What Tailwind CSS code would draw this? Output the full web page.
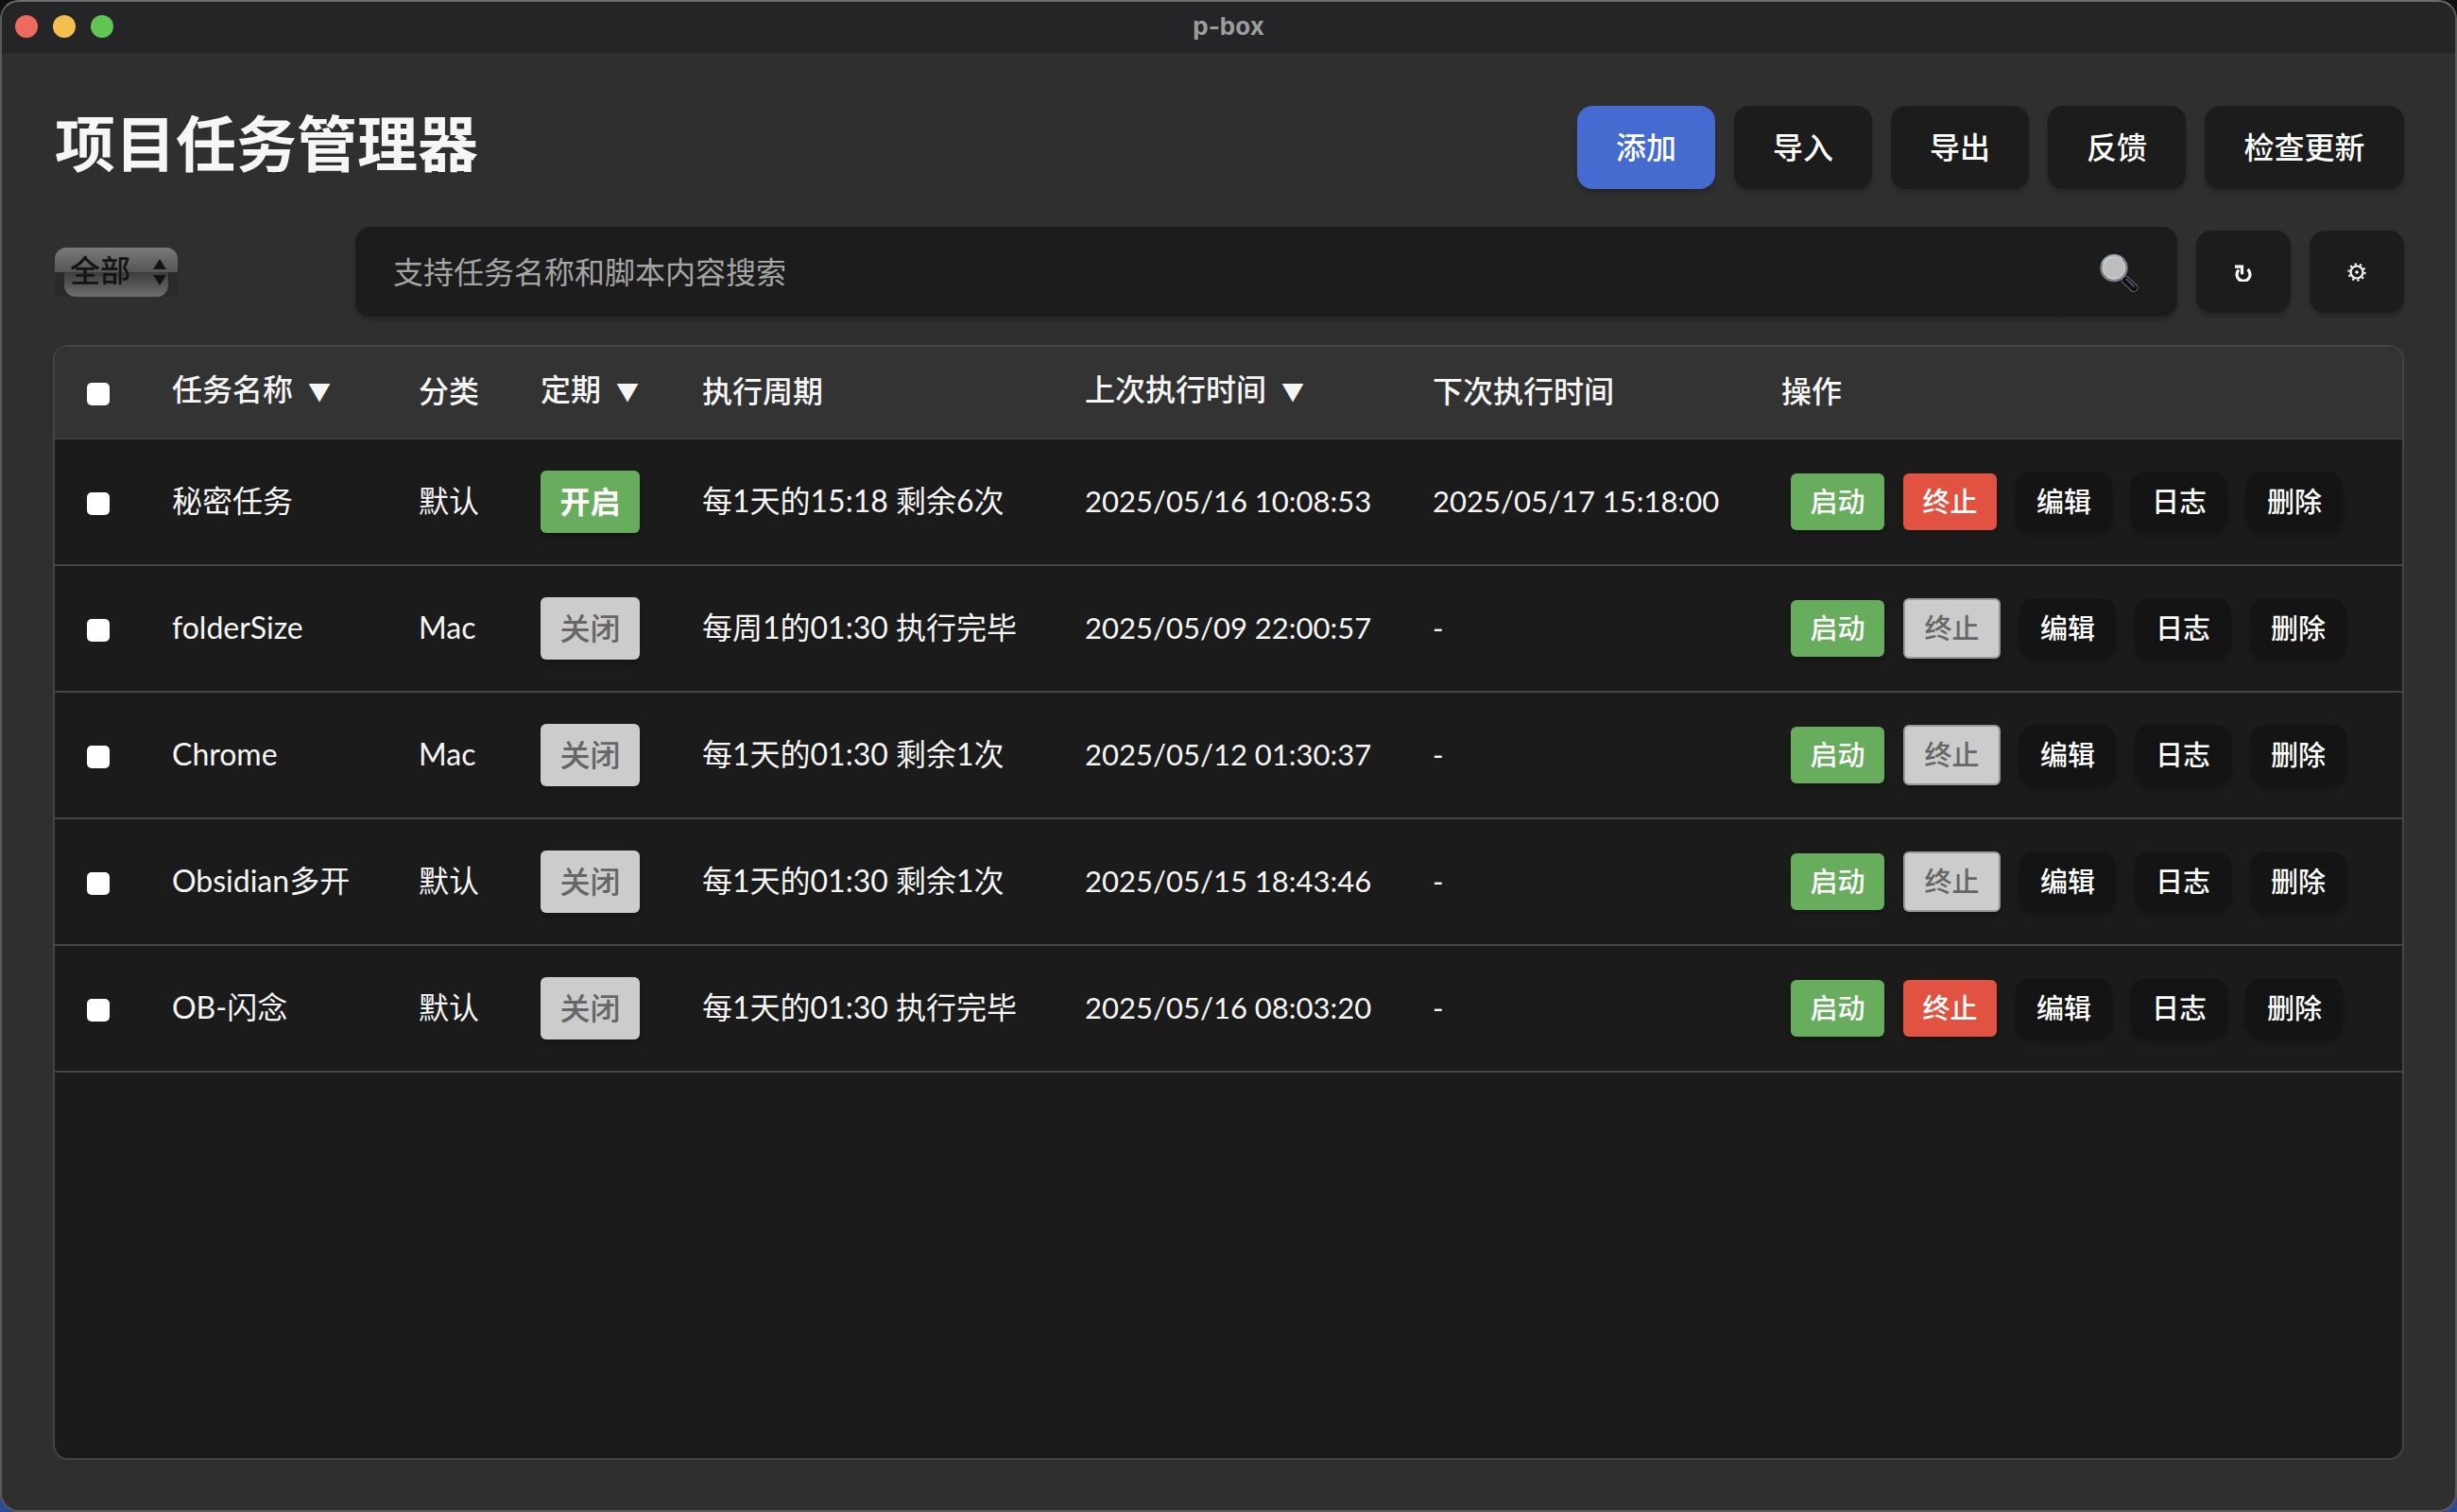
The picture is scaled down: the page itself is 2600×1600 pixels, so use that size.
<!DOCTYPE html>
<html lang="zh-CN">
  <head>
    <meta charset="UTF-8" />
    <meta name="viewport" content="width=device-width, initial-scale=1.0" />
    <title>p-box</title>
    <script src="https://cdn.jsdelivr.net/npm/@tailwindcss/browser@4"></script>
  </head>
  <body class="bg-gradient-to-b from-[#101012] to-[#2f4a96] h-screen font-[Lato,'Noto_Sans_CJK_SC',sans-serif] text-[32px] leading-[48px] text-[#f6f6f6]">
    <div class="h-full flex flex-col bg-[#2f2f2f] border-2 border-[#5a5a5a] border-t-[#6e6e70] rounded-[20px] overflow-hidden">
      <!-- Title bar -->
      <div class="h-[54px] shrink-0 bg-[#252527] grid grid-cols-3 items-center px-[14px] pb-[2px]">
        <div class="flex gap-4">
          <span class="size-6 rounded-full bg-[#ed6a5e]"></span>
          <span class="size-6 rounded-full bg-[#f5bf4f]"></span>
          <span class="size-6 rounded-full bg-[#61c554]"></span>
        </div>
        <div class="text-center text-[26px] leading-8 font-bold font-[Inter,sans-serif] text-[#9d9d9e]">p-box</div>
      </div>

      <main class="flex-1 min-h-0 flex flex-col px-[54px] pt-14 pb-[53px]">
        <!-- Header -->
        <header class="flex items-start justify-between">
          <h1 class="text-[64px] leading-[80px] font-bold pl-[2px]">项目任务管理器</h1>
          <div class="flex gap-5 font-medium text-white">
            <button class="h-[88px] min-w-[146px] px-10 rounded-2xl bg-[#456bd0] shadow-[0_4px_4px_rgba(0,0,0,0.2)]">添加</button>
            <button class="h-[88px] min-w-[146px] px-10 rounded-2xl bg-[#1c1c1c] shadow-[0_4px_4px_rgba(0,0,0,0.2)]">导入</button>
            <button class="h-[88px] min-w-[146px] px-10 rounded-2xl bg-[#1c1c1c] shadow-[0_4px_4px_rgba(0,0,0,0.2)]">导出</button>
            <button class="h-[88px] min-w-[146px] px-10 rounded-2xl bg-[#1c1c1c] shadow-[0_4px_4px_rgba(0,0,0,0.2)]">反馈</button>
            <button class="h-[88px] min-w-[211px] px-10 rounded-2xl bg-[#1c1c1c] shadow-[0_4px_4px_rgba(0,0,0,0.2)]">检查更新</button>
          </div>
        </header>

        <!-- Filter and search -->
        <div class="mt-10 flex items-center">
          <div class="w-[320px] shrink-0 pl-[2px]">
            <div class="relative w-[130px] h-[52px] rounded-t-xl bg-linear-to-b from-[#7a7a7a] from-0% via-[#555] via-50% to-[#2a2a2a] to-50%">
              <span class="absolute inset-x-[10px] bottom-0 h-[26px] rounded-b-xl bg-linear-to-b from-[#3c3c3c] to-[#707070]"></span>
              <select aria-label="分类" class="relative appearance-none w-full h-full pl-4 pb-1 font-medium leading-[48px] text-[#141414]">
                <option>全部</option>
                <option>默认</option>
                <option>Mac</option>
              </select>
              <svg class="absolute right-3 top-3 w-[14px] h-7 pointer-events-none" viewBox="0 0 14 28" fill="#141414"><path d="M0 11 7 0l7 11zM0 17h14L7 28z" /></svg>
            </div>
          </div>
          <form class="flex-1 h-[95px] flex rounded-2xl bg-[#1c1c1c] shadow-[0_4px_4px_rgba(0,0,0,0.2)]">
            <input type="text" aria-label="搜索" placeholder="支持任务名称和脚本内容搜索" class="flex-1 min-w-0 pl-10 outline-none placeholder:text-[#a5a5a5]" />
            <button type="button" aria-label="搜索" class="w-[124px] grid place-items-center border-l border-[#191919]">
              <svg class="w-[42px] h-[42px]" viewBox="0 0 42 42">
                <path d="M24 25l4 4" stroke="#8b8680" stroke-width="3" />
                <path d="M27.500 29.500l8.500 8" stroke="#6a7076" stroke-width="9" stroke-linecap="round" />
                <path d="M27.500 29.500l8.500 8" stroke="#0c0d0f" stroke-width="7" stroke-linecap="round" />
                <path d="M28.500 28.500l7.500 7.500" stroke="#4b545c" stroke-width="2" stroke-linecap="round" />
                <circle cx="15" cy="16.500" r="13.500" fill="#bdbdbd" stroke="#7a8087" stroke-width="2.500" />
                <path d="M3 12a13 13 0 0 1 21-5" fill="none" stroke="#a9bdd6" stroke-width="1.500" />
                <circle cx="15" cy="16.500" r="11.500" fill="none" stroke="#d6d6d6" stroke-width="1" />
              </svg>
            </button>
          </form>
          <button aria-label="刷新" class="ml-5 w-[100px] h-[87px] grid place-items-center rounded-2xl bg-[#1c1c1c] shadow-[0_4px_4px_rgba(0,0,0,0.2)]">
            <svg class="w-5 h-5" viewBox="0 0 20 20" fill="none" stroke="#fff"><path d="M5 7.500a7 7 0 1 0 9.500-.5" stroke-width="3.200" /><path d="M1 4.200h7.500v8" stroke-width="3.200" /></svg>
          </button>
          <button aria-label="设置" class="ml-5 w-[100px] h-[87px] grid place-items-center rounded-2xl bg-[#1c1c1c] shadow-[0_4px_4px_rgba(0,0,0,0.2)]">
            <svg class="w-5 h-5" viewBox="0 0 20 20" fill="none" stroke="#fff"><circle cx="10" cy="10" r="6.500" stroke-width="2.200" /><circle cx="10" cy="10" r="8.600" stroke-width="2" stroke-dasharray="2.400 3" /><circle cx="10" cy="10" r="1.800" fill="#fff" stroke="none" /></svg>
          </button>
        </div>

        <!-- Task table -->
        <div class="mt-[30px] flex-1 min-h-0 overflow-hidden rounded-2xl border-2 border-[#444] bg-[#1b1b1b]">
          <table class="w-full table-fixed border-separate border-spacing-0 text-left whitespace-nowrap">
            <colgroup>
              <col class="w-[92px]" />
              <col class="w-[261px]" />
              <col class="w-[129px]" />
              <col class="w-[171px]" />
              <col class="w-[405px]" />
              <col class="w-[368px]" />
              <col class="w-[369px]" />
              <col />
            </colgroup>
            <thead class="bg-[#333]">
              <tr class="h-[98px] *:border-b *:border-[#444] *:px-8 *:pb-1 *:font-medium">
                <th><input type="checkbox" aria-label="全选" class="block appearance-none size-6 rounded-[5px] bg-white mt-1.5 mx-0.5" /></th>
                <th>任务名称<span class="ml-4 text-[24px]">▼</span></th>
                <th>分类</th>
                <th>定期<span class="ml-4 text-[24px]">▼</span></th>
                <th>执行周期</th>
                <th>上次执行时间<span class="ml-4 text-[24px]">▼</span></th>
                <th>下次执行时间</th>
                <th>操作</th>
              </tr>
            </thead>
            <tbody id="tasks"></tbody>
          </table>
        </div>
      </main>
    </div>

    <script>
      const tasks = [
        { name: "秘密任务", type: "默认", on: true, cycle: "每1天的15:18 剩余6次", last: "2025/05/16 10:08:53", next: "2025/05/17 15:18:00", running: true },
        { name: "folderSize", type: "Mac", on: false, cycle: "每周1的01:30 执行完毕", last: "2025/05/09 22:00:57", next: "-", running: false },
        { name: "Chrome", type: "Mac", on: false, cycle: "每1天的01:30 剩余1次", last: "2025/05/12 01:30:37", next: "-", running: false },
        { name: "Obsidian多开", type: "默认", on: false, cycle: "每1天的01:30 剩余1次", last: "2025/05/15 18:43:46", next: "-", running: false },
        { name: "OB-闪念", type: "默认", on: false, cycle: "每1天的01:30 执行完毕", last: "2025/05/16 08:03:20", next: "-", running: true },
      ];

      const toggle = (on) =>
        on
          ? `<button class="block h-[66px] min-w-[105px] rounded-md bg-[#68ad5d] font-bold text-white shadow-[0_4px_4px_rgba(0,0,0,0.2)]">开启</button>`
          : `<button class="block h-[66px] min-w-[105px] rounded-md bg-[#ccc] font-medium text-[#666] shadow-[0_4px_4px_rgba(0,0,0,0.2)]">关闭</button>`;

      const stop = (running) =>
        running
          ? `<button class="h-[60px] min-w-[99px] rounded-md bg-[#e25241] shadow-[0_4px_4px_rgba(0,0,0,0.2)]">终止</button>`
          : `<button disabled class="h-16 min-w-[103px] rounded-md border-2 border-[#999] bg-[#ccc] text-[#666] shadow-[0_4px_4px_rgba(0,0,0,0.2)]">终止</button>`;

      const plain = (text) =>
        `<button class="h-16 min-w-[102px] rounded-2xl bg-[#141414] shadow-[0_4px_4px_rgba(0,0,0,0.2)]">${text}</button>`;

      document.getElementById("tasks").innerHTML = tasks
        .map(
          (t) => `
            <tr class="h-[134px] *:border-b-2 *:border-[#444] *:px-8">
              <td><input type="checkbox" aria-label="${t.name}" class="block appearance-none size-6 rounded-[5px] bg-white mt-1 mx-0.5" /></td>
              <td class="pb-[2px]">${t.name}</td>
              <td class="pb-[2px]">${t.type}</td>
              <td>${toggle(t.on)}</td>
              <td class="pb-[2px]">${t.cycle}</td>
              <td class="pb-[2px] text-[31px]">${t.last}</td>
              <td class="pb-[2px] text-[31px]">${t.next}</td>
              <td>
                <div class="flex items-center gap-5 pl-[10px] text-[29px] leading-[44px] font-medium text-white">
                  <button class="h-[60px] min-w-[99px] rounded-md bg-[#68ad5d] shadow-[0_4px_4px_rgba(0,0,0,0.2)]">启动</button>
                  ${stop(t.running)}
                  ${plain("编辑")}
                  ${plain("日志")}
                  ${plain("删除")}
                </div>
              </td>
            </tr>`
        )
        .join("");
    </script>
  </body>
</html>
